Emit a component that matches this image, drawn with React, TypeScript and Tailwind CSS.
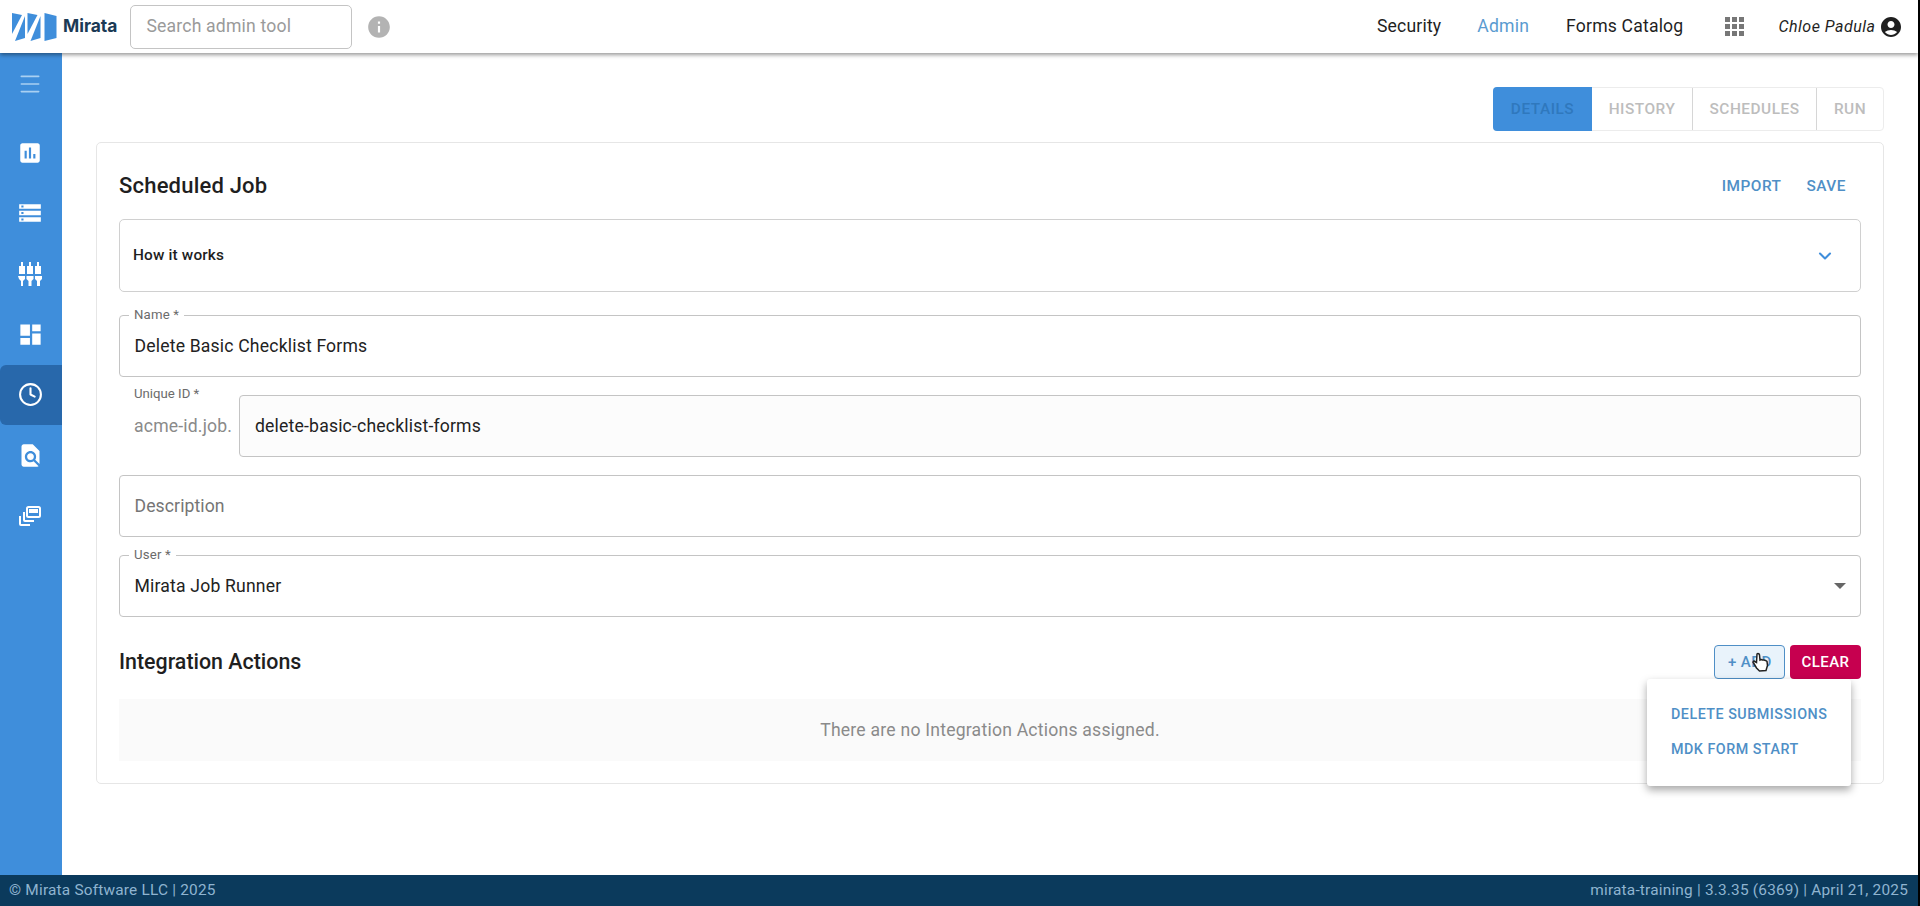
import React from 'react';
import { ChevronDown, Clock, Menu } from 'lucide-react';

const NavIcon: React.FC<{ children: React.ReactNode; active?: boolean }> = ({ children, active }) => (
  <div className={`h-[60.5px] pr-[2px] flex items-center justify-center text-white ${active ? 'bg-[#2868ab] rounded-l-md' : ''}`}>
    {children}
  </div>
);

const Logo = () => (
  <svg width="45" height="28" viewBox="0 0 45 28" fill="#3f8edb">
    <path d="M0 0 L10 2 L0 21 Z" />
    <path d="M13 3 L13 25 L3 28 Z" />
    <path d="M15.500 0 L25.500 2 L15.500 21 Z" />
    <path d="M28.500 3 L28.500 25 L18.500 28 Z" />
    <path d="M32.500 0 L44.500 3 L44.500 25 L32.500 28 Z" />
  </svg>
);

const Legend: React.FC<{ label: string }> = ({ label }) => (
  <span className="absolute -top-[8px] left-[9px] bg-white px-[5px] text-[13.2px] leading-[14px] text-[#6b6b6b]">{label}</span>
);

export default function App() {
  return (
    <div className="h-[906px] w-[1920px] flex flex-col bg-black font-['Roboto',sans-serif] overflow-hidden">
      <div className="flex-1 flex flex-col w-[1918px] bg-white min-h-0">
        <header className="relative z-10 h-[53px] shrink-0 bg-white shadow-[0_2px_4px_rgba(0,0,0,0.4)] flex items-center pl-[12px] pr-[15px]">
          <Logo />
          <span className="ml-[6px] text-[17.4px] font-bold text-[#1b3a55] font-['Inter',sans-serif]">Mirata</span>
          <div className="ml-[13px] w-[222px] h-[44px] border border-[#c4c4c4] rounded-[5px] flex items-center px-[15px] text-[17.6px] tracking-[0.18px] text-[#9a9a9a]">Search admin tool</div>
          <svg className="ml-[14px]" width="26" height="26" viewBox="0 0 24 24" fill="#b3b3b3">
            <path d="M12 2C6.480 2 2 6.480 2 12s4.480 10 10 10 10-4.480 10-10S17.520 2 12 2zm1 15h-2v-6h2v6zm0-8h-2V7h2v2z" />
          </svg>
          <div className="flex-1" />
          <nav className="flex items-center text-[17.6px] tracking-[0.18px] text-[#1f1f1f]">
            <span>Security</span>
            <span className="ml-[36px] text-[#5a9bd0]">Admin</span>
            <span className="ml-[37px]">Forms Catalog</span>
          </nav>
          <div className="ml-[42px] grid grid-cols-3 gap-[2px]">
            {Array.from({ length: 9 }).map((_, i) => (
              <div key={i} className="w-[5px] h-[5px] bg-[#777777]" />
            ))}
          </div>
          <span className="ml-[34px] text-[16px] italic text-[#1f1f1f] tracking-[0.5px]">Chloe Padula</span>
          <svg className="ml-[3.5px]" width="24" height="24" viewBox="0 0 24 24" fill="#1f1f1f">
            <path d="M12 2C6.480 2 2 6.480 2 12s4.480 10 10 10 10-4.480 10-10S17.520 2 12 2zm0 4c1.930 0 3.500 1.570 3.500 3.500S13.930 13 12 13s-3.500-1.570-3.500-3.500S10.070 6 12 6zm0 14c-2.030 0-4.430-.82-6.140-2.880C7.550 15.800 9.680 15 12 15s4.450.8 6.140 2.120C16.430 19.180 14.030 20 12 20z" />
          </svg>
        </header>

        <div className="flex-1 flex min-h-0">
          <aside className="w-[62px] shrink-0 bg-[#3f8edb] flex flex-col">
            <div className="h-[69.5px] pb-[7px] pr-[2px] flex items-center justify-center">
              <Menu className="w-[26px] h-[26px] text-[#a9d0f2]" strokeWidth={1.5} />
            </div>
            <NavIcon>
              <svg width="26" height="26" viewBox="0 0 24 24" fill="white"><path d="M19 3H5c-1.100 0-2 .9-2 2v14c0 1.100.9 2 2 2h14c1.100 0 2-.9 2-2V5c0-1.100-.9-2-2-2zM9 17H7v-7h2v7zm4 0h-2V7h2v10zm4 0h-2v-4h2v4z" /></svg>
            </NavIcon>
            <NavIcon>
              <svg width="26" height="26" viewBox="0 0 24 24" fill="white"><path d="M2 20h20v-4H2v4zm2-3h2v2H4v-2zM2 4v4h20V4H2zm4 3H4V5h2v2zm-4 7h20v-4H2v4zm2-3h2v2H4v-2z" /></svg>
            </NavIcon>
            <NavIcon>
              <svg width="26" height="26" viewBox="0 0 26 26" fill="white">
                <path d="M4 1h2v4h2v8H2V5h2zM12 1h2v4h2v8h-6V5h2zM20 1h2v4h2v8h-6V5h2z" />
                <path d="M1 15h7v3l-2 2v5H4v-5l-2-2zM9.500 15h7v3l-2 2v5h-3v-5l-2-2zM18 15h7v3l-2 2v5h-3v-5l-2-2z" />
              </svg>
            </NavIcon>
            <NavIcon>
              <svg width="27" height="27" viewBox="0 0 24 24" fill="white"><path d="M3 13h8.500V3H3v10zm0 8h8.500v-6H3v6zm10.500 0H21V11h-7.500v10zm0-18v6H21V3h-7.500z" /></svg>
            </NavIcon>
            <NavIcon active>
              <Clock className="w-[25px] h-[25px]" strokeWidth={2} />
            </NavIcon>
            <NavIcon>
              <svg width="27" height="27" viewBox="0 0 24 24" fill="white"><path d="M20 19.590V8l-6-6H6c-1.100 0-2 .9-2 2v16c0 1.100.9 2 2 2h12c.45 0 .85-.15 1.190-.4l-4.430-4.430c-.8.52-1.740.83-2.760.83-2.760 0-5-2.240-5-5s2.240-5 5-5 5 2.240 5 5c0 1.020-.31 1.960-.83 2.750L20 19.590zM9 13c0 1.660 1.340 3 3 3s3-1.340 3-3-1.340-3-3-3-3 1.340-3 3z" /></svg>
            </NavIcon>
            <NavIcon>
              <svg width="24" height="24" viewBox="0 0 24 24" fill="none" stroke="white" strokeWidth="2">
                <rect x="9" y="3" width="13" height="10" rx="1.500" fill="none" />
                <rect x="11" y="5" width="9" height="4" fill="white" stroke="none" />
                <path d="M6 8v8a1 1 0 0 0 1 1h9M2 12v8a1 1 0 0 0 1 1h9" />
              </svg>
            </NavIcon>
          </aside>

          <main className="flex-1 min-w-0 px-[34px] pt-[34px] bg-white">
            <div className="flex justify-end">
              <div className="flex h-[44px] text-[15.4px] font-medium tracking-[0.5px] rounded-[4px] border border-[#ececec] text-[#bdbdbd]">
                <div className="w-[99px] -m-px pt-[2px] bg-[#3f8edb] text-[#2f78bd] rounded-l-[4px] flex items-center justify-center">DETAILS</div>
                <div className="w-[101px] pt-[2px] border-r border-[#d6d6d6] flex items-center justify-center ml-px">HISTORY</div>
                <div className="w-[124px] pt-[2px] border-r border-[#d6d6d6] flex items-center justify-center">SCHEDULES</div>
                <div className="w-[66px] pt-[2px] flex items-center justify-center">RUN</div>
              </div>
            </div>

            <section className="relative mt-[11px] h-[642px] border border-[#e6e6e6] rounded-[5px] px-[22px]">
              <div className="flex items-center justify-between h-[76px] pt-[10px]">
                <h2 className="text-[22px] font-medium text-[#1f1f1f] tracking-[0.2px] -mt-[2px]">Scheduled Job</h2>
                <div className="flex gap-[25px] pr-[15px] pt-[1px] text-[15.4px] font-medium tracking-[0.5px] text-[#4f8fc6]">
                  <span>IMPORT</span>
                  <span>SAVE</span>
                </div>
              </div>

              <div className="h-[73px] border border-[#d0d0d0] rounded-[5px] flex items-center justify-between pl-[13px] pr-[25px]">
                <span className="text-[15.4px] font-medium text-[#1f1f1f] tracking-[0.15px]">How it works</span>
                <ChevronDown className="w-[20px] h-[20px] text-[#3f8edb]" strokeWidth={2.5} />
              </div>

              <div className="relative mt-[23px] h-[62px] border border-[#c4c4c4] rounded-[4px] flex items-center px-[14.5px] text-[17.6px] tracking-[0.18px] text-[#222222]">
                <Legend label="Name *" />
                Delete Basic Checklist Forms
              </div>

              <div className="relative mt-[18px] h-[62px] flex items-center pl-[15px] text-[17.6px] tracking-[0.18px]">
                <span className="absolute -top-[8px] left-[15px] text-[13.2px] leading-[14px] tracking-normal text-[#6b6b6b]">Unique ID *</span>
                <span className="w-[105px] shrink-0 text-[#8a8a8a]">acme-id.job.</span>
                <div className="flex-1 h-full bg-[#fcfcfc] border border-[#c4c4c4] rounded-[4px] flex items-center px-[15px] text-[#222222]">delete-basic-checklist-forms</div>
              </div>

              <div className="mt-[18px] h-[62px] border border-[#c4c4c4] rounded-[4px] flex items-center px-[14.5px] text-[17.6px] tracking-[0.1px] text-[#757575]">Description</div>

              <div className="relative mt-[18px] h-[62px] border border-[#c4c4c4] rounded-[4px] flex items-center justify-between pl-[14.5px] pr-[14px] text-[17.6px] tracking-[0.18px] text-[#222222]">
                <Legend label="User *" />
                Mirata Job Runner
                <div className="w-0 h-0 border-x-[6px] border-x-transparent border-t-[6px] border-t-[#666666]" />
              </div>

              <div className="flex items-center justify-between mt-[28px] h-[34px]">
                <h3 className="text-[21.4px] font-medium text-[#1f1f1f]">Integration Actions</h3>
                <div className="flex gap-[5px] text-[15px] font-medium tracking-[0.4px]">
                  <div className="relative w-[71px] h-[34px] border border-[#4f8fc6] bg-[#e9f3fb] rounded-[4px] text-[#4f8fc6] flex items-center pl-[13px]">
                    + ADD
                    <svg className="absolute left-[36px] top-[6px]" width="20" height="22" viewBox="0 0 20 22">
                      <path d="M6 2c1-1 2.500 0 2.500 1L9 8l1-.5c1 0 1.500.5 1.500.5l1.500 0 1.500.5 1.500 1 .5 4-1.500 5-6.500.5-3-3-3.500-6 1-1 2.500 1.500z" fill="white" stroke="#222222" strokeWidth="1.500" />
                    </svg>
                  </div>
                  <div className="w-[71px] h-[34px] bg-[#c6004f] rounded-[4px] text-white flex items-center justify-center">CLEAR</div>
                </div>
              </div>

              <div className="mt-[20px] h-[62px] bg-[#fafafa] flex items-center justify-center text-[17.6px] text-[#8a8a8a] tracking-[0.22px]">There are no Integration Actions assigned.</div>

              <div className="absolute right-[32px] top-[536px] w-[204px] h-[107px] bg-white rounded-[3px] shadow-[0_4px_8px_rgba(0,0,0,0.35)] pt-[18px] text-[14.3px] font-medium tracking-[0.5px] text-[#4f8fc6]">
                <div className="h-[35px] pl-[24px] flex items-center">DELETE SUBMISSIONS</div>
                <div className="h-[35px] pl-[24px] flex items-center">MDK FORM START</div>
              </div>
            </section>
          </main>
        </div>

        <footer className="h-[31px] shrink-0 bg-[#0b3a5c] flex items-center justify-between pl-[9px] pr-[10px] text-[15.4px] text-[#8fb4d0] tracking-[0.2px]">
          <span>© Mirata Software LLC | 2025</span>
          <span>mirata-training | 3.3.35 (6369) | April 21, 2025</span>
        </footer>
      </div>
    </div>
  );
}
